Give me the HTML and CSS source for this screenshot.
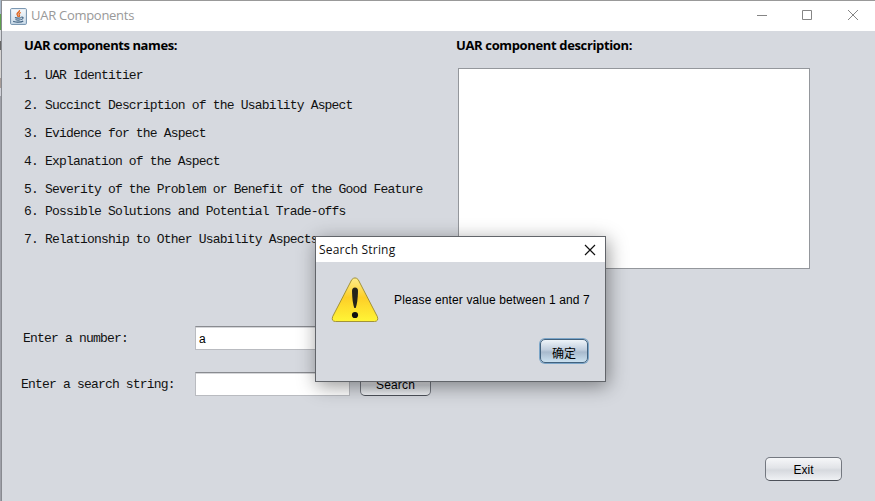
FILE: index.html
```html
<!DOCTYPE html>
<html lang="en">
<head>
<meta charset="utf-8">
<title>UAR Components</title>
<link rel="stylesheet" href="styles.css">
</head>
<body>
<div class="desktop">
  <main class="window">
    <header class="titlebar">
      <svg class="java-icon" width="17" height="17" viewBox="0 0 17 17" fill="none">
        <defs><linearGradient id="tile" x2="0" y2="1"><stop stop-color="#f7fafc"/><stop offset="1" stop-color="#cbdcea"/></linearGradient></defs>
        <rect x=".6" y=".6" width="15.8" height="15.8" rx="1" fill="url(#tile)" stroke="#6f8eab"/>
        <path d="M9.500 2.200C10 4 6.800 4.600 7 6.200 7.100 7.200 8.200 7.500 8 9M10.800 4.500C9 5.300 8.600 6.200 9.400 7.200 9.900 7.900 9.300 8.500 9 8.900" stroke="#e0641c" stroke-width="1.300"/>
        <path d="M5 9.500C6 10.300 10 10.200 11 9.600M11.200 9.200C14 8.700 13.600 11 11 11.500M5.500 11.500C7 12.200 9.400 12.100 10.600 11.500M3.600 13C2.800 14.400 11.500 14.700 13.200 13" stroke="#3f6180" stroke-width="1.100"/>
      </svg>
      <h1 class="window-title">UAR Components</h1>
      <svg class="controls" width="104" height="12" viewBox="0 0 104 12" fill="none" stroke="#858585">
        <path d="M0 5.500H10M45.500 .5H54.500V9.500H45.500ZM91 0L101 10M101 0L91 10"/>
      </svg>
    </header>
    <section class="content">
      <div class="components">
        <h2 class="heading names-heading">UAR components names:</h2>
        <ol class="names">
          <li>1. UAR Identitier</li>
          <li>2. Succinct Description of the Usability Aspect</li>
          <li>3. Evidence for the Aspect</li>
          <li>4. Explanation of the Aspect</li>
          <li>5. Severity of the Problem or Benefit of the Good Feature</li>
          <li>6. Possible Solutions and Potential Trade-offs</li>
          <li>7. Relationship to Other Usability Aspects</li>
        </ol>
      </div>
      <div class="description">
        <h2 class="heading desc-heading">UAR component description:</h2>
        <div class="description-box"></div>
      </div>
    </section>
    <form class="form">
      <div class="row">
        <label class="label label-number">Enter a number:</label>
        <div class="field">a</div>
      </div>
      <div class="row">
        <label class="label">Enter a search string:</label>
        <div class="field"></div>
        <button type="button" class="button search">Search</button>
      </div>
    </form>
    <footer class="footer"><button type="button" class="button exit">Exit</button></footer>
  </main>
  <section class="dialog">
    <header class="dialog-title">
      <span>Search String</span>
      <svg width="12" height="12" viewBox="0 0 12 12" stroke="#111" stroke-width="1.200"><path d="M1 1L11 11M11 1L1 11"/></svg>
    </header>
    <div class="dialog-body">
      <svg class="warning" width="48" height="46" viewBox="0 0 48 46">
        <defs><linearGradient id="amber" x2="0" y2="1"><stop stop-color="#ffed8a"/><stop offset=".45" stop-color="#fdcf28"/><stop offset="1" stop-color="#fff536"/></linearGradient></defs>
        <path d="M20.800 2.600Q24 -.8 27.200 2.600L46.300 39.500Q48 44.300 43.500 44.500H4.500Q0 44.300 1.700 39.500Z" fill="url(#amber)" stroke="#a39337"/>
        <path d="M21 14Q21 10.500 24 10.500T27 14Q26.800 25 24.700 31H23.300Q21.200 25 21 14Z" fill="#26241b"/>
        <circle cx="24" cy="38" r="3.100" fill="#111"/>
      </svg>
      <p class="message">Please enter value between 1 and 7</p>
    </div>
    <div class="dialog-actions"><button type="button" class="button ok">确定</button></div>
  </section>
</div>
</body>
</html>
```
FILE: styles.css
```css
* { box-sizing: border-box; }
body { margin: 0; overflow: hidden; }
h1, h2, p, ol { margin: 0; padding: 0; }
.desktop {
  position: relative;
  width: 875px;
  height: 501px;
  padding-left: 1px;
  background: linear-gradient(#a8b8c8 0 14px, #5fa04e 14px 30px, #d5d8dc 30px 41px, #666 41px 50px, #d5d3d2 50px 78px, #a79c98 78px 88px, #d0d1d8 88px 96px, #9ea0a8 96px);
}
.window {
  height: 501px;
  border-left: 1px solid #888a90;
  border-top: 1px solid #999;
  background: #d6d9df;
}
.titlebar {
  display: flex;
  align-items: center;
  height: 30px;
  padding: 0 14px 0 8px;
  background: #fff;
}
.window-title {
  flex: 1;
  margin-left: 4px;
  padding-bottom: 1px;
  font: 13px/19px "Open Sans", sans-serif;
  letter-spacing: -.28px;
  color: #999;
}
.content { display: flex; height: 295px; padding: 4px 0 0 22px; }
.components { width: 432px; }
.heading { font: bold 13px/20px "Open Sans", sans-serif; color: #000; }
.names-heading { letter-spacing: -.42px; }
.desc-heading { letter-spacing: -.36px; }
.names {
  display: grid;
  grid-template-rows: 30px 28px 28px 28px 22px 28px 20px;
  margin-top: 11px;
  list-style: none;
}
.names, .label {
  font-family: "Liberation Mono", monospace;
  font-size: 13px;
  line-height: 20px;
  letter-spacing: -.81px;
  color: #111;
  white-space: pre;
}
.description-box {
  width: 352px;
  height: 201px;
  margin: 13px 0 0 2px;
  border: 1px solid #94979c;
  background: #fff;
}
.form { display: grid; gap: 22px; padding-left: 19px; }
.row { display: flex; align-items: center; height: 24px; }
.label { width: 174px; padding-top: 2px; }
.label-number { padding-left: 2px; }
.field {
  width: 155px;
  height: 24px;
  padding-left: 3px;
  border: 1px solid #b9bbc0;
  border-top-color: #898b90;
  background: #fff;
  box-shadow: inset 0 1px #d5d6d9;
  font: 12px/24px "Liberation Sans", sans-serif;
}
.button {
  height: 24px;
  padding: 1px 0 0;
  border: 1px solid #747880;
  border-bottom-color: #4d5159;
  border-radius: 5px;
  background: linear-gradient(#f6f7f9, #e2e4e8 45%, #d6d9de 55%, #eff1f4);
  font: 12px/20px "Liberation Sans", sans-serif;
  color: #000;
}
.search { width: 71px; margin-left: 10px; padding-top: 2px; letter-spacing: .15px; }
.footer { display: flex; justify-content: flex-end; padding: 61px 33px 0 0; }
.exit { width: 77px; }
.dialog {
  position: absolute;
  left: 315px;
  top: 236px;
  width: 291px;
  height: 146px;
  border: 1px solid #62656a;
  background: #d6d9df;
  box-shadow: 2px 4px 18px rgba(0, 0, 0, .42);
}
.dialog-title {
  display: flex;
  align-items: center;
  justify-content: space-between;
  height: 25px;
  padding: 0 9px 0 3px;
  background: #fff;
  font: 12px/20px "Open Sans", sans-serif;
  letter-spacing: .2px;
  color: #111;
}
.dialog-body { display: flex; padding: 15px 0 0 15px; }
.message {
  margin: 13px 0 0 15px;
  font: 12px/20px "Liberation Sans", sans-serif;
  letter-spacing: .13px;
  white-space: nowrap;
}
.dialog-actions { display: flex; justify-content: flex-end; padding: 16px 17px 0 0; }
.ok {
  width: 48px;
  height: 24px;
  padding-top: 3px;
  border-color: #42627e;
  background: linear-gradient(#eef4f9, #bfcddd 45%, #a8bacd 55%, #cbe1f0);
  box-shadow: 0 0 0 1px #7ba5c8;
  font-family: "Noto Sans CJK SC", sans-serif;
}
```
